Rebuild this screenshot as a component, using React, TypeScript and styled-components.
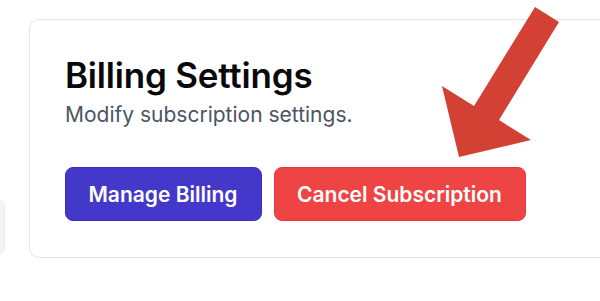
import React from "react";
import styled, { createGlobalStyle } from "styled-components";

const Global = createGlobalStyle`
  html, body { margin: 0; padding: 0; background: #ffffff; }
  body { font-family: Inter, "Noto Sans", sans-serif; overflow: hidden; }
`;

const Page = styled.div`
  position: relative;
  width: 600px;
  height: 301px;
  overflow: hidden;
  padding: 19px 0 0 29px;
  box-sizing: border-box;
`;

const SideBox = styled.div`
  position: absolute;
  left: -41px;
  top: 200px;
  width: 44px;
  height: 52px;
  border-radius: 6px;
  background: #f4f4f5;
  border: 1px solid #ececee;
`;

const Card = styled.section`
  width: 640px;
  box-sizing: border-box;
  border: 1px solid #e4e4e7;
  border-radius: 10px;
  background: #ffffff;
  padding: 34px 36px 36px 35px;
  display: flex;
  flex-direction: column;
`;

const Title = styled.h2`
  margin: 0;
  font-size: 35px;
  line-height: 42px;
  font-weight: 600;
  color: #09090b;
  letter-spacing: -0.2px;
`;

const Subtitle = styled.p`
  margin: 3px 0 0;
  font-size: 21px;
  line-height: 32px;
  color: #4b5563;
`;

const Actions = styled.div`
  display: flex;
  gap: 12px;
  margin-top: 36px;
`;

const Button = styled.button<{ $variant: "primary" | "danger" }>`
  height: 54px;
  padding: 0 23px 0 22.5px;
  border-radius: 8px;
  font-family: Inter, "Noto Sans", sans-serif;
  font-size: 21px;
  font-weight: 600;
  color: #ffffff;
  cursor: pointer;
  background: ${(p) => (p.$variant === "primary" ? "#4338ca" : "#ef4444")};
  border: 1px solid ${(p) => (p.$variant === "primary" ? "#3b30b8" : "#e23b3b")};
`;

const Arrow = styled.svg`
  position: absolute;
  left: 0;
  top: 0;
  pointer-events: none;
`;

export default function App() {
  return (
    <>
      <Global />
      <Page>
        <SideBox />
        <Card>
          <Title>Billing Settings</Title>
          <Subtitle>Modify subscription settings.</Subtitle>
          <Actions>
            <Button $variant="primary">Manage Billing</Button>
            <Button $variant="danger">Cancel Subscription</Button>
          </Actions>
        </Card>
        <Arrow width="600" height="301" viewBox="0 0 600 301">
          <polygon
            points="535,7 559,22 499,120 531,140 459,157 442,86 474,106"
            fill="#d34135"
          />
        </Arrow>
      </Page>
    </>
  );
}
